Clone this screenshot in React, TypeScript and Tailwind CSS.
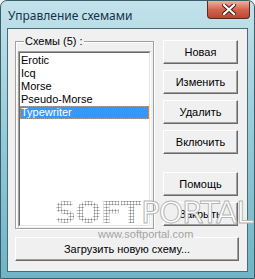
import React from "react";

const schemes = ["Erotic", "Icq", "Morse", "Pseudo-Morse", "Typewriter"];

function Btn({ label, className = "" }: { label: string; className?: string }) {
  return (
    <button
      className={
        "h-[24px] bg-[#f0f0f0] border border-t-white border-l-white border-r-[#696969] border-b-[#696969] shadow-[inset_-1px_-1px_0_#a0a0a0] text-[11px] text-black leading-none " +
        className
      }
    >
      {label}
    </button>
  );
}

export default function App() {
  return (
    <div className="w-[255px] h-[279px] bg-[#f0f0f0] font-['Liberation_Sans',sans-serif]">
      <div className="relative w-[255px] h-[279px] flex flex-col rounded-t-[7px] border border-[#3a5f6b] bg-gradient-to-b from-[#c3e2ea] via-[#93cad7] to-[#6fb4c5] overflow-hidden">
        {/* title bar */}
        <div className="h-[27px] flex items-start">
          <span className="pl-[7px] pt-[6px] text-[12px] text-[#14324a] font-['Noto_Sans',sans-serif]">
            Управление схемами
          </span>
          <div className="ml-auto mr-[4px] w-[43px] h-[18px] rounded-b-[4px] border border-t-0 border-[#5a2a22] bg-gradient-to-b from-[#eeb0a2] via-[#d2654e] to-[#bb4630] flex items-center justify-center">
            <svg width="14" height="11" viewBox="0 0 14 11">
              <path d="M2 1 L12 10 M12 1 L2 10" stroke="#3d1a14" strokeWidth="4" strokeLinecap="square" />
              <path d="M2 1 L12 10 M12 1 L2 10" stroke="#ffffff" strokeWidth="2.2" strokeLinecap="square" />
            </svg>
          </div>
        </div>

        {/* client area */}
        <div className="relative mx-[6px] mb-[6px] flex-1 border border-[#4b6a75] bg-[#f0f0f0] px-[7px] pt-[6px]">
          <div className="flex gap-[9px]">
            <fieldset className="w-[139px] h-[194px] border border-[#a0a0a0] shadow-[inset_1px_1px_0_#fff,1px_1px_0_#fff] px-[2px] pb-[2px]">
              <legend className="ml-[6px] px-[1px] bg-[#f0f0f0] text-[11px] leading-[13px] text-black">
                Схемы (5) :
              </legend>
              <div className="mt-[3px] h-[176px] border border-t-[#a0a0a0] border-l-[#a0a0a0] border-r-white border-b-white">
                <div className="h-full border border-t-[#696969] border-l-[#696969] border-r-[#e3e3e3] border-b-[#e3e3e3] bg-white pt-[1px]">
                  {schemes.map((s, i) => (
                    <div
                      key={s}
                      className={
                        "h-[13px] pl-[1px] text-[11px] leading-[13px] " +
                        (i === 4
                          ? "bg-[#3399ff] text-white outline-1 outline-dotted outline-offset-[-1px] outline-[#ff8a1e]"
                          : "text-black")
                      }
                    >
                      {s}
                    </div>
                  ))}
                </div>
              </div>
            </fieldset>

            <div className="flex flex-col w-[75px] pt-[5px]">
              <div className="flex flex-col gap-[6px]">
                <Btn label="Новая" />
                <Btn label="Изменить" />
                <Btn label="Удалить" />
                <Btn label="Включить" />
              </div>
              <div className="flex flex-col gap-[6px] mt-[18px]">
                <Btn label="Помощь" />
                <Btn label="Закрыть" />
              </div>
            </div>
          </div>

          <Btn label="Загрузить новую схему..." className="w-[224px] mt-[8px] block" />

          {/* watermark */}
          <div className="absolute left-[46px] top-[168px] flex items-end leading-none pointer-events-none font-['DejaVu_Sans',sans-serif] font-bold text-[31px] tracking-[-1px]">
            <span className="bg-[radial-gradient(circle,#8c8c8c_45%,transparent_50%)] bg-[length:3px_3px] bg-clip-text text-transparent">
              SOFT
            </span>
            <span className="font-normal text-white [-webkit-text-stroke:1px_#b5b5b5]">PORTAL</span>
          </div>
          <div className="absolute left-[90px] top-[197px] text-[11px] text-[#a3a3a3] pointer-events-none">
            www.softportal.com
          </div>
        </div>
      </div>
    </div>
  );
}
